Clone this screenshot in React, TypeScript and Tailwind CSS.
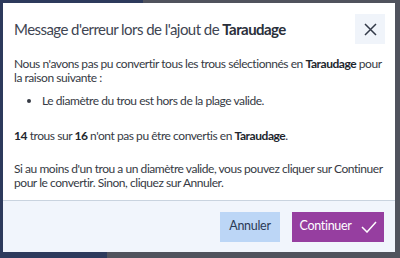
import React from "react";

export default function App() {
  return (
    <div className="w-[400px] h-[258px] bg-[#50535d] relative overflow-hidden" style={{ fontFamily: "Lato, 'Noto Sans', sans-serif" }}>
      <div className="absolute left-0 top-0 w-[143px] h-[3px] bg-[#2d3a5c]" />
      <div className="absolute left-0 top-0 w-[3px] h-[258px] bg-[#2d3a5c]" />
      <div className="absolute left-0 bottom-0 w-[107px] h-[6px] bg-[#2d3a5c]" />
      <div className="absolute left-[3px] top-[3px] w-[392px] h-[249px] bg-white flex flex-col">
        <div className="flex items-start justify-between pl-[11px] pr-[10px] pt-[11px]">
          <div className="pt-[5px] text-[15px] tracking-[-0.55px] text-[#404552] leading-[20px]">
            Message d'erreur lors de l'ajout de <span className="font-bold text-[#2a2f3a]">Taraudage</span>
          </div>
          <div className="w-[30px] h-[30px] bg-[#f0f4fa] flex items-center justify-center">
            <svg width="13" height="13" viewBox="0 0 13 13" fill="none" stroke="#333a48" strokeWidth="1.5">
              <path d="M1 1 L12 12 M12 1 L1 12" />
            </svg>
          </div>
        </div>
        <div className="pl-[11px] pr-[12px] pt-[13px] text-[12px] tracking-[-0.45px] leading-[14px] text-[#363a44] flex-1">
          <p>
            Nous n'avons pas pu convertir tous les trous sélectionnés en <span className="font-bold text-[#22262e]">Taraudage</span> pour la raison suivante :
          </p>
          <ul className="list-disc pl-[28px] mt-[9px]">
            <li>Le diamètre du trou est hors de la plage valide.</li>
          </ul>
          <p className="mt-[21px]">
            <span className="font-bold text-[#22262e]">14</span> trous sur <span className="font-bold text-[#22262e]">16</span> n'ont pas pu être convertis en <span className="font-bold text-[#22262e]">Taraudage</span>.
          </p>
          <p className="mt-[19px]">
            Si au moins d'un trou a un diamètre valide, vous pouvez cliquer sur Continuer pour le convertir. Sinon, cliquez sur Annuler.
          </p>
        </div>
        <div className="h-[52px] border-t border-[#c9d3df] bg-[#f1f5fc] flex items-center justify-end gap-[12px] pr-[11px]">
          <button className="w-[60px] h-[30px] bg-[#bcd6f6] text-[#2c3a55] text-[12.5px] tracking-[-0.3px]">Annuler</button>
          <button className="w-[92px] h-[30px] bg-[#963ea0] text-white text-[12.5px] tracking-[-0.3px] flex items-center justify-center gap-[9px]">
            Continuer
            <svg width="16" height="12" viewBox="0 0 16 12" fill="none" stroke="white" strokeWidth="1.5">
              <path d="M1 6 L6 11 L15 1" />
            </svg>
          </button>
        </div>
      </div>
    </div>
  );
}
